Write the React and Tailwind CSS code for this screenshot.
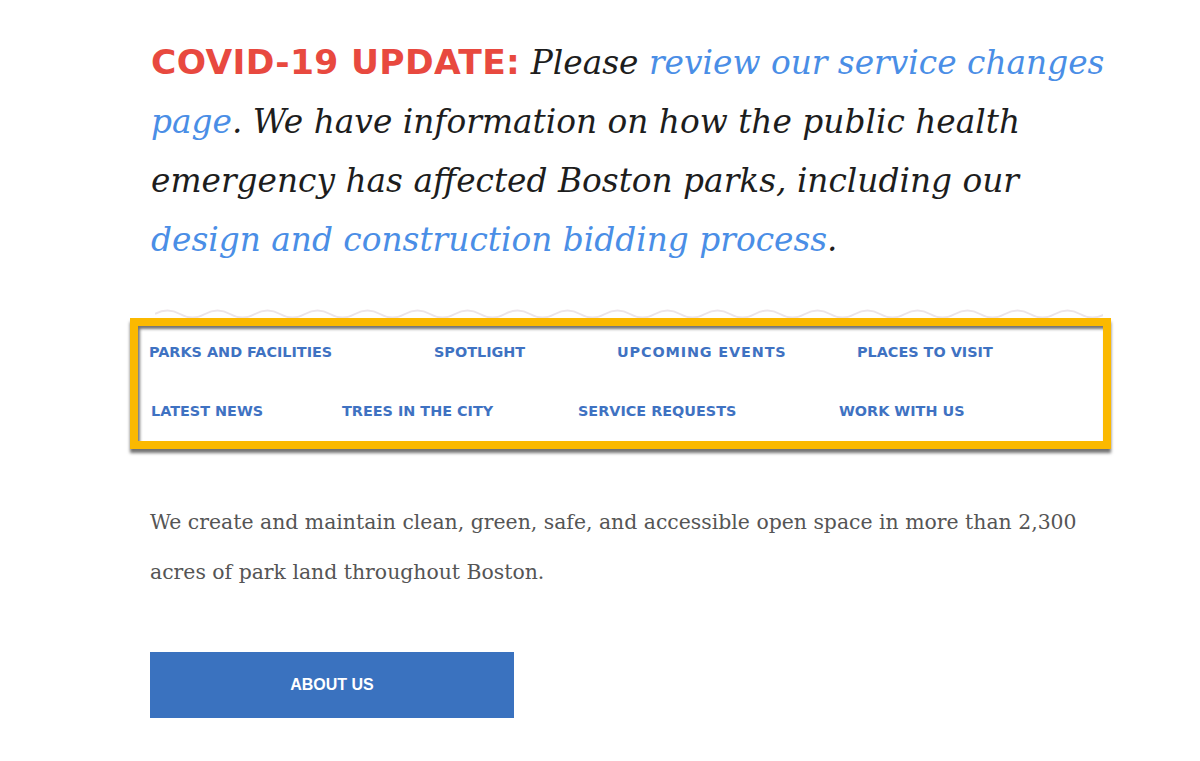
export default function App() {
  const row1 = [
    { label: 'PARKS AND FACILITIES', w: 'w-[285px]', cls: '' },
    { label: 'SPOTLIGHT', w: 'w-[183px]', cls: '' },
    { label: 'UPCOMING EVENTS', w: 'w-[240px]', cls: 'tracking-[0.06em]' },
    { label: 'PLACES TO VISIT', w: 'w-[200px]', cls: 'mt-[2px]' },
  ]
  const row2 = [
    { label: 'LATEST NEWS', w: 'w-[193px]', cls: 'ml-[2px] mt-[1px]' },
    { label: 'TREES IN THE CITY', w: 'w-[236px]', cls: '' },
    { label: 'SERVICE REQUESTS', w: 'w-[261px]', cls: 'mt-[1px]' },
    { label: 'WORK WITH US', w: 'w-[200px]', cls: '' },
  ]

  return (
    <div className="min-h-screen bg-white" style={{ fontFamily: '"DejaVu Serif", serif' }}>
      <div className="w-[960px] ml-[151px] pt-[33px]">
        {/* covid notice */}
        <p className="text-[32.8px] leading-[59px] italic text-[#1d1d1d] whitespace-nowrap">
          <span
            className="not-italic font-bold text-[#e8493f] text-[34.5px] tracking-[0.01em]"
            style={{ fontFamily: '"DejaVu Sans", sans-serif' }}
          >
            COVID-19 UPDATE:
          </span>{' '}
          Please <a className="text-[#4a8ee6]">review our service changes</a>
          <br />
          <a className="text-[#4a8ee6]">page</a>. We have information on how the public health
          <br />
          emergency has affected Boston parks, including our
          <br />
          <a className="text-[#4a8ee6]">design and construction bidding process</a>.
        </p>

        {/* wavy divider */}
        <svg className="block ml-[4px] mt-[36px]" width="948" height="12" viewBox="0 0 948 12">
          <path
            d={Array.from({ length: 19 })
              .map((_, i) => `${i === 0 ? 'M0 8 ' : ''}q12.5 -7 25 0 q12.5 7 25 0`)
              .join(' ')}
            fill="none"
            stroke="#ebe4ea"
            strokeWidth="2"
          />
        </svg>
      </div>

      {/* quick links box */}
      <div
        className="ml-[130px] w-[981px] h-[131px] border-[8px] border-[#fbb900] bg-white shadow-[0_4px_3px_rgba(0,0,0,0.55),inset_2px_3px_3px_rgba(0,0,0,0.55)] flex flex-col pt-[14px] pl-[11px]"
        style={{ fontFamily: '"DejaVu Sans", sans-serif' }}
      >
        <div className="flex">
          {row1.map((it) => (
            <div key={it.label} className={`${it.w} shrink-0`}>
              <span className={`text-[14.4px] font-bold text-[#3f72c2] ${it.cls} inline-block`}>{it.label}</span>
            </div>
          ))}
        </div>
        <div className="flex mt-[35px]">
          {row2.map((it) => (
            <div key={it.label} className={`${it.w} shrink-0`}>
              <span className={`text-[14.4px] font-bold text-[#3f72c2] ${it.cls} inline-block`}>{it.label}</span>
            </div>
          ))}
        </div>
      </div>

      <div className="ml-[150px] mt-[48px]">
        <p className="text-[20.4px] leading-[50px] text-[#555555] whitespace-nowrap">
          We create and maintain clean, green, safe, and accessible open space in more than 2,300
          <br />
          acres of park land throughout Boston.
        </p>
        <button
          className="mt-[55px] w-[364px] h-[66px] bg-[#3a72bf] text-white font-bold text-[16px] flex items-center justify-center"
          style={{ fontFamily: '"Liberation Sans", sans-serif' }}
        >
          ABOUT US
        </button>
      </div>
    </div>
  )
}
